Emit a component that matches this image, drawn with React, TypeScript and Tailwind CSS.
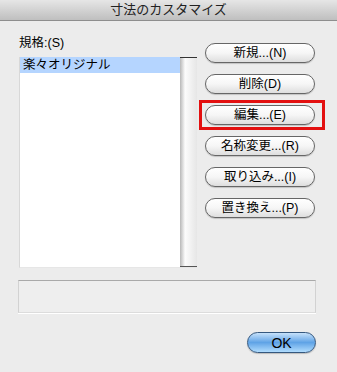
import React from 'react'

const font = { fontFamily: '"Liberation Sans", "Noto Sans CJK JP", sans-serif' }

const buttons = [
  { label: '新規...(N)', marked: false },
  { label: '削除(D)', marked: false },
  { label: '編集...(E)', marked: true },
  { label: '名称変更...(R)', marked: false },
  { label: '取り込み...(I)', marked: false },
  { label: '置き換え...(P)', marked: false },
]

function AquaButton({ label }: { label: string }) {
  return (
    <div className="w-[110px] h-[20px] rounded-full border border-[#666] bg-gradient-to-b from-white via-[#f6f6f6] to-[#dedede] shadow-[0_1px_1px_rgba(0,0,0,0.18)] flex items-center justify-center text-[12.5px] leading-none text-black">
      {label}
    </div>
  )
}

export default function App() {
  return (
    <div className="w-[337px] h-[372px] bg-[#ececec] flex flex-col overflow-hidden" style={font}>
      {/* title bar */}
      <div className="h-[21px] bg-gradient-to-b from-[#e6e6e6] to-[#bfbfbf] border-b border-[#8e8e8e] flex items-center justify-center text-[13px] text-[#222]">
        寸法のカスタマイズ
      </div>

      <div className="flex pl-[19px]">
        {/* list column */}
        <div className="flex flex-col pt-[14px]">
          <div className="h-[16px] text-[12.5px] leading-[16px] text-black">規格:(S)</div>
          <div className="mt-[6px] w-[178px] h-[211px] flex border-l border-[#d8d8d8] border-b border-b-[#e6e6e6]">
            <div className="flex-1 bg-white">
              <div className="h-[16px] bg-[#b5d5ff] pl-[3px] text-[12.5px] leading-[16px] text-black">楽々オリジナル</div>
            </div>
            <div className="w-[17px] border-t border-t-[#333] border-b border-b-[#555] bg-gradient-to-r from-[#b8b8b8] via-[#fcfcfc] via-30% to-[#e6e6e6]" />
          </div>
        </div>

        {/* button column */}
        <div className="flex flex-col gap-[11px] pt-[22px] ml-[8px]">
          {buttons.map((b) => (
            <div key={b.label} className="relative">
              <AquaButton label={b.label} />
              {b.marked && (
                <div className="absolute -top-[5px] -bottom-[5px] -left-[6px] -right-[10px] border-[3px] border-[#e31010]" />
              )}
            </div>
          ))}
        </div>
      </div>

      {/* text field */}
      <div className="mt-[12px] ml-[18px] w-[298px] h-[33px] bg-[#eeeeee] border-t border-t-[#a9a9a9] border-x border-x-[#d2d2d2] border-b border-b-[#dcdcdc] shadow-[0_1px_0_#fff]" />

      {/* OK */}
      <div className="flex justify-end pr-[21px] mt-[19px]">
        <div className="w-[69px] h-[21px] rounded-full border border-[#35587f] bg-gradient-to-b from-[#c6e1fa] via-[#5fa3e6] to-[#b0dcfd] shadow-[0_1px_1px_rgba(0,0,0,0.2)] flex items-center justify-center text-[14px] leading-none text-black">
          OK
        </div>
      </div>
    </div>
  )
}
